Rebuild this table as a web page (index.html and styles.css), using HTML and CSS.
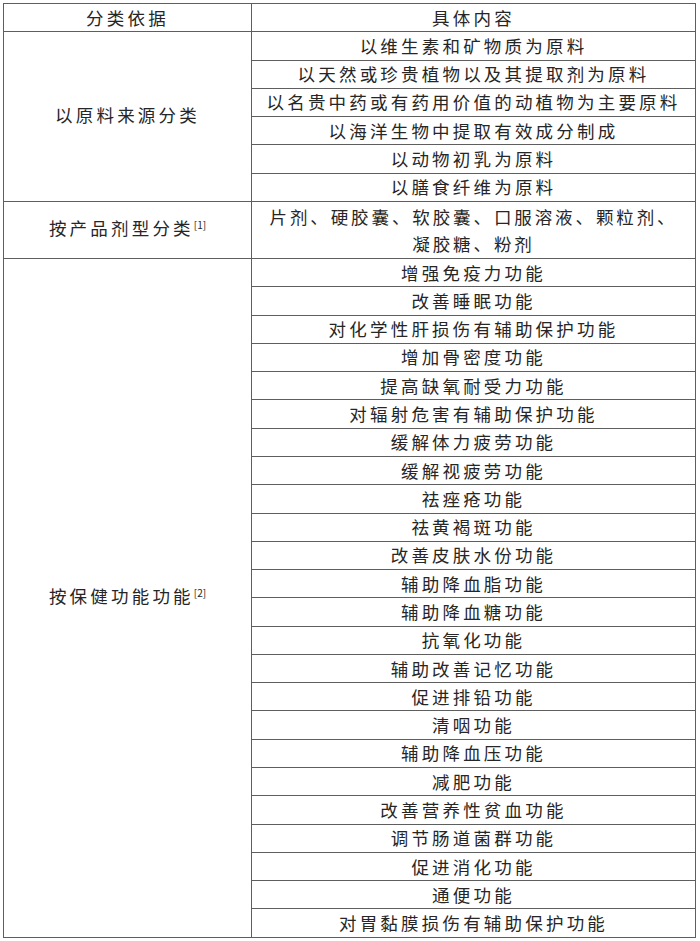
FILE: index.html
```html
<!DOCTYPE html>
<html lang="zh-CN">
<head>
<meta charset="utf-8">
<title>保健食品分类</title>
<link rel="stylesheet" href="styles.css">
</head>
<body>
<table class="cls-table">
  <colgroup><col class="col-a"><col class="col-b"></colgroup>
  <thead>
    <tr class="row"><th>分类依据</th><th>具体内容</th></tr>
  </thead>
  <tbody>
    <tr class="row"><td class="group" rowspan="6">以原料来源分类</td><td>以维生素和矿物质为原料</td></tr>
    <tr class="row"><td>以天然或珍贵植物以及其提取剂为原料</td></tr>
    <tr class="row"><td>以名贵中药或有药用价值的动植物为主要原料</td></tr>
    <tr class="row"><td>以海洋生物中提取有效成分制成</td></tr>
    <tr class="row"><td>以动物初乳为原料</td></tr>
    <tr class="row"><td>以膳食纤维为原料</td></tr>
    <tr class="row-double"><td class="group">按产品剂型分类<sup>[1]</sup></td><td class="multi"><div class="stack"><span class="line">片剂、硬胶囊、软胶囊、口服溶液、颗粒剂、</span><span class="line">凝胶糖、粉剂</span></div></td></tr>
    <tr class="row"><td class="group" rowspan="24">按保健功能功能<sup>[2]</sup></td><td>增强免疫力功能</td></tr>
    <tr class="row"><td>改善睡眠功能</td></tr>
    <tr class="row"><td>对化学性肝损伤有辅助保护功能</td></tr>
    <tr class="row"><td>增加骨密度功能</td></tr>
    <tr class="row"><td>提高缺氧耐受力功能</td></tr>
    <tr class="row"><td>对辐射危害有辅助保护功能</td></tr>
    <tr class="row"><td>缓解体力疲劳功能</td></tr>
    <tr class="row"><td>缓解视疲劳功能</td></tr>
    <tr class="row"><td>祛痤疮功能</td></tr>
    <tr class="row"><td>祛黄褐斑功能</td></tr>
    <tr class="row"><td>改善皮肤水份功能</td></tr>
    <tr class="row"><td>辅助降血脂功能</td></tr>
    <tr class="row"><td>辅助降血糖功能</td></tr>
    <tr class="row"><td>抗氧化功能</td></tr>
    <tr class="row"><td>辅助改善记忆功能</td></tr>
    <tr class="row"><td>促进排铅功能</td></tr>
    <tr class="row"><td>清咽功能</td></tr>
    <tr class="row"><td>辅助降血压功能</td></tr>
    <tr class="row"><td>减肥功能</td></tr>
    <tr class="row"><td>改善营养性贫血功能</td></tr>
    <tr class="row"><td>调节肠道菌群功能</td></tr>
    <tr class="row"><td>促进消化功能</td></tr>
    <tr class="row"><td>通便功能</td></tr>
    <tr class="row"><td>对胃黏膜损伤有辅助保护功能</td></tr>
  </tbody>
</table>
</body>
</html>
```

FILE: styles.css
```css
html, body {
  margin: 0;
  padding: 0;
  background: #ffffff;
}

body {
  padding: 3px 0 0 3px;
}

.cls-table {
  border-collapse: collapse;
  table-layout: fixed;
  width: 692px;
  font-family: "Noto Sans CJK SC", "Noto Sans", sans-serif;
  font-size: 17.5px;
  color: #262626;
}

.col-a { width: 248px; }
.col-b { width: 444px; }

.cls-table th,
.cls-table td {
  border: 1px solid #5e5e5e;
  padding: 0 4px;
  text-align: center;
  vertical-align: middle;
  font-weight: normal;
  letter-spacing: 3.2px;
  line-height: 26px;
  white-space: nowrap;
}

.cls-table .group {
  padding-bottom: 3px;
}

.row { height: 28.29px; }
.row-double { height: 57px; }

.cls-table .multi {
  line-height: 27px;
  letter-spacing: 2.9px;
  padding: 0;
}

.stack {
  display: flex;
  flex-direction: column;
  align-items: center;
}

.line {
  display: block;
}

sup {
  font-size: 10px;
  letter-spacing: 0;
  vertical-align: top;
  position: relative;
  top: -3px;
}
```
